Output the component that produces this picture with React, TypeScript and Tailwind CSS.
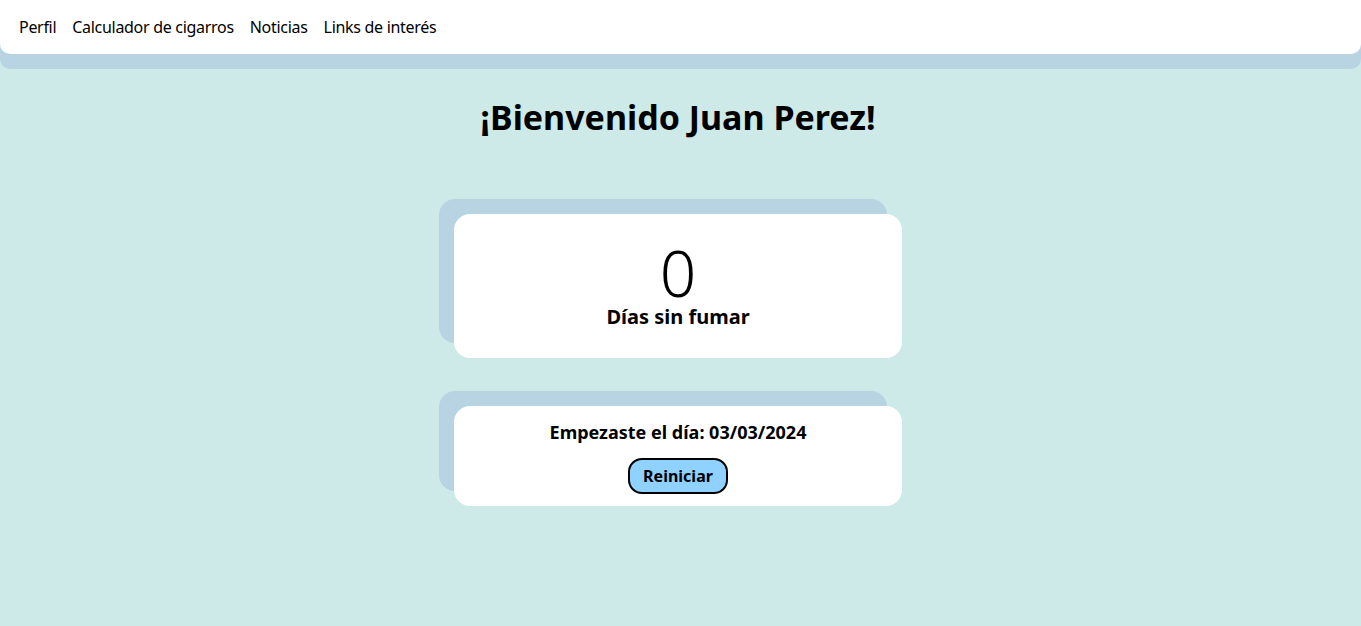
export default function App() {
  return (
    <div
      className="min-h-screen bg-[#cdeae9] text-black"
      style={{ fontFamily: '"Noto Sans", "Open Sans", sans-serif' }}
    >
      {/* nav */}
      <nav className="flex h-[54px] items-center gap-4 rounded-b-[10px] bg-white px-[19px] text-[16px] tracking-[-0.3px] shadow-[0_15px_0_#b8d4e3]">
        <a>Perfil</a>
        <a>Calculador de cigarros</a>
        <a>Noticias</a>
        <a>Links de interés</a>
      </nav>

      <main className="flex flex-col items-center pr-[5px]">
        <h1 className="mt-[40px] text-[34px] font-bold leading-[46px]">¡Bienvenido Juan Perez!</h1>

        <div className="mt-[74px] flex flex-col items-center gap-[48px]">
          <div className="flex h-[144px] w-[448px] flex-col items-center justify-center rounded-[16px] bg-white pb-[2px] shadow-[-15px_-15px_0_#b8d4e3]">
            <span className="text-[64px] font-light leading-[64px]">0</span>
            <span className="text-[20px] font-bold leading-[24px]">Días sin fumar</span>
          </div>

          <div className="flex h-[100px] w-[448px] flex-col items-center justify-center gap-[14px] rounded-[16px] bg-white pt-[2px] shadow-[-15px_-15px_0_#b8d4e3]">
            <p className="text-[18px] font-bold leading-[24px]">Empezaste el día: 03/03/2024</p>
            <button className="h-[36px] w-[100px] rounded-[14px] border-2 border-black bg-[#8fd1ff] text-[16px] font-bold">
              Reiniciar
            </button>
          </div>
        </div>
      </main>
    </div>
  );
}
